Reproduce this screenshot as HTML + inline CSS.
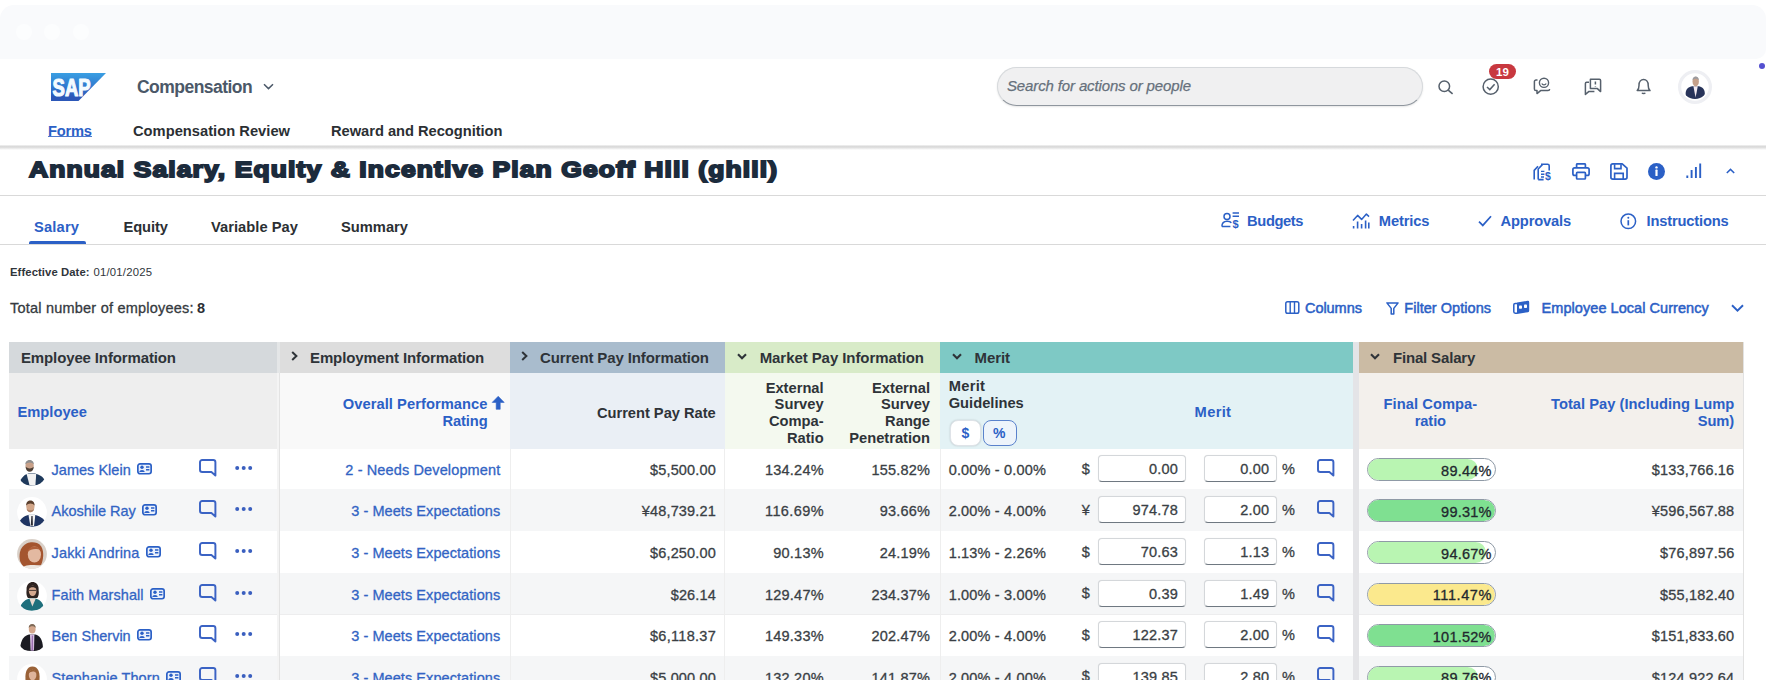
<!DOCTYPE html>
<html><head><meta charset="utf-8">
<style>
*{box-sizing:border-box;margin:0;padding:0}
html,body{width:1766px;height:680px;overflow:hidden;background:#fff;font-family:"Liberation Sans",sans-serif;color:#3a3f45}
.a{position:absolute;white-space:nowrap}
.x{line-height:20px;height:20px}
.r{position:absolute}
svg{position:absolute;overflow:visible}
</style></head><body>
<div class="r" style="left:0.00px;top:5.00px;width:1766.00px;height:54.00px;background:#f9fafc;border-radius:14px 14px 10px 0;"></div>
<div class="r" style="left:16.00px;top:24.00px;width:16.00px;height:16.00px;background:#fcfdfe;border-radius:50%;"></div>
<div class="r" style="left:44.00px;top:24.00px;width:16.00px;height:16.00px;background:#fcfdfe;border-radius:50%;"></div>
<div class="r" style="left:73.00px;top:24.00px;width:16.00px;height:16.00px;background:#fcfdfe;border-radius:50%;"></div>
<svg style="left:51.4px;top:72.6px" width="55" height="28" viewBox="0 0 55 28"><defs><linearGradient id="sg" x1="0" y1="0" x2="0" y2="1"><stop offset="0" stop-color="#3a9fe3"/><stop offset="0.55" stop-color="#2f74cc"/><stop offset="0.85" stop-color="#2c58b8"/><stop offset="1" stop-color="#2c58b8"/></linearGradient></defs><polygon points="0,0 55,0 27.5,28 0,28" fill="url(#sg)"/><text x="1.6" y="22.6" font-family="Liberation Sans" font-weight="bold" font-size="24" fill="#f4fbff" textLength="38" lengthAdjust="spacingAndGlyphs" stroke="#f4fbff" stroke-width="1.2" stroke-linejoin="round">SAP</text></svg>
<svg style="left:263.00px;top:83.30px" width="11" height="7" viewBox="0 0 11 7"><path d="M1 1.2 L5.5 5.6 L10 1.2" fill="none" stroke="#4b5868" stroke-width="1.5"/></svg>
<div class="r" style="left:0.00px;top:144.60px;width:1766.00px;height:5.40px;background:linear-gradient(#f4f4f4,#dadada 28%,#dcdcdc 45%,#efefef 75%,#fff);"></div>
<div class="r" style="left:48.00px;top:135.90px;width:44.00px;height:1.40px;background:#4d78cc;"></div>
<div class="r" style="left:0.00px;top:194.50px;width:1766.00px;height:1.00px;background:#d9d9d9;"></div>
<div class="r" style="left:28.50px;top:241.00px;width:57.00px;height:3.00px;background:#2b60c6;border-radius:2px 2px 0 0;"></div>
<div class="r" style="left:0.00px;top:244.00px;width:1766.00px;height:1.00px;background:#d9d9d9;"></div>
<div class="r" style="left:997.00px;top:67.00px;width:425.60px;height:38.50px;background:#f0f0f1;border-radius:19.5px;border:1px solid #d6d9dc;border-bottom:1.6px solid #8f969e;box-shadow:0 1px 2px rgba(0,0,0,.10);"></div>
<svg style="left:1438.2px;top:79.8px" width="16" height="15" viewBox="0 0 16 15"><circle cx="6.3" cy="6.3" r="5.3" fill="none" stroke="#56606c" stroke-width="1.5"/><path d="M10.2 10.2 L14.6 13.8" stroke="#56606c" stroke-width="1.6"/></svg>
<svg style="left:1482.3px;top:77.6px" width="18" height="18" viewBox="0 0 18 18"><circle cx="8.7" cy="8.7" r="7.6" fill="none" stroke="#56606c" stroke-width="1.5"/><path d="M5 9 L7.8 11.6 L12.6 6.2" fill="none" stroke="#56606c" stroke-width="1.5"/></svg>
<div class="r" style="left:1489.00px;top:64.20px;width:26.50px;height:15.30px;background:#c8383f;border-radius:8px;"></div>
<svg style="left:1533.4px;top:77.4px" width="18" height="18" viewBox="0 0 18 18"><path d="M4.5 3 H3 A1.6 1.6 0 0 0 1.4 4.6 V12 A1.6 1.6 0 0 0 3 13.6 H4 V16.6 L7.6 13.6 H15 A1.6 1.6 0 0 0 16.6 12" fill="none" stroke="#56606c" stroke-width="1.5" stroke-linejoin="round"/><circle cx="11" cy="5.8" r="4.6" fill="none" stroke="#56606c" stroke-width="1.4"/><path d="M8.8 6.6 C9.6 8.4 12.4 8.4 13.2 6.6" fill="none" stroke="#56606c" stroke-width="1.2"/></svg>
<svg style="left:1584.2px;top:77.8px" width="18" height="18" viewBox="0 0 18 18"><path d="M5 4.2 H2.6 A1.2 1.2 0 0 0 1.4 5.4 V16.4 L5 13.4 H10.4" fill="none" stroke="#56606c" stroke-width="1.5" stroke-linejoin="round"/><path d="M6.4 1.2 H15.4 A1.2 1.2 0 0 1 16.6 2.4 V13.6 L13.4 10.6 H6.4 Z" fill="none" stroke="#56606c" stroke-width="1.5" stroke-linejoin="round"/><path d="M11.4 3.4 V6.6 M11.4 8 V8.6" stroke="#56606c" stroke-width="1.5"/></svg>
<svg style="left:1636.2px;top:77.9px" width="16" height="17" viewBox="0 0 16 17"><path d="M1.2 12.6 C3.2 10.6 3 9 3 7 C3 3.6 5 1.4 7.6 1.4 C10.2 1.4 12.2 3.6 12.2 7 C12.2 9 12 10.6 14 12.6 Z" fill="none" stroke="#56606c" stroke-width="1.5" stroke-linejoin="round"/><path d="M6 14.8 C6.4 15.8 8.8 15.8 9.2 14.8" fill="none" stroke="#56606c" stroke-width="1.4"/></svg>
<svg style="left:1677px;top:68.7px" width="36" height="36" viewBox="0 0 36 36"><defs><clipPath id="cpu"><circle cx="18" cy="17.2" r="12.8"/></clipPath></defs><circle cx="18" cy="18" r="15.4" fill="#fff" stroke="#eeeff3" stroke-width="3.2"/><g clip-path="url(#cpu)"><path d="M8.6 25 C8.6 19.4 12 17.8 15.2 17.3 L21.8 17.3 C24.8 17.8 27.8 19.4 27.8 25 L27.8 32 L8.6 32 Z" fill="#28345a"/><path d="M16.4 17.2 L18.6 28.6 L20.8 17.2 Z" fill="#f3ebf2"/><ellipse cx="18.7" cy="12.6" rx="3.2" ry="4.9" fill="#c6a18b"/><path d="M15.5 11.6 C15.2 6.2 22.2 6.2 21.9 11.6 C20.6 9.2 16.8 9.2 15.5 11.6 Z" fill="#9b9b9f"/></g></svg>
<div class="r" style="left:1759.20px;top:63.20px;width:6.00px;height:6.00px;background:#5450d0;border-radius:50%;"></div>
<div class="r" style="left:9.00px;top:448.60px;width:1734.20px;height:40.80px;background:#ffffff;"></div>
<div class="r" style="left:9.00px;top:489.00px;width:1734.20px;height:1.40px;background:#ededee;"></div>
<div class="r" style="left:9.00px;top:489.40px;width:1734.20px;height:41.80px;background:#f5f6f7;"></div>
<div class="r" style="left:9.00px;top:530.80px;width:1734.20px;height:1.40px;background:#ededee;"></div>
<div class="r" style="left:9.00px;top:531.20px;width:1734.20px;height:41.80px;background:#ffffff;"></div>
<div class="r" style="left:9.00px;top:572.60px;width:1734.20px;height:1.40px;background:#ededee;"></div>
<div class="r" style="left:9.00px;top:573.00px;width:1734.20px;height:41.50px;background:#f5f6f7;"></div>
<div class="r" style="left:9.00px;top:614.10px;width:1734.20px;height:1.40px;background:#ededee;"></div>
<div class="r" style="left:9.00px;top:614.50px;width:1734.20px;height:41.50px;background:#ffffff;"></div>
<div class="r" style="left:9.00px;top:655.60px;width:1734.20px;height:1.40px;background:#ededee;"></div>
<div class="r" style="left:9.00px;top:656.00px;width:1734.20px;height:41.50px;background:#f5f6f7;"></div>
<div class="r" style="left:9.00px;top:697.10px;width:1734.20px;height:1.40px;background:#ededee;"></div>
<div class="r" style="left:9.00px;top:342.00px;width:268.40px;height:31.00px;background:#d5d9dc;"></div>
<div class="r" style="left:9.00px;top:373.00px;width:268.40px;height:75.60px;background:#eeeeee;"></div>
<div class="r" style="left:279.70px;top:342.00px;width:230.30px;height:31.00px;background:#dddddd;"></div>
<div class="r" style="left:279.70px;top:373.00px;width:230.30px;height:75.60px;background:#f9f9f9;"></div>
<div class="r" style="left:510.00px;top:342.00px;width:214.60px;height:31.00px;background:#a9bccd;"></div>
<div class="r" style="left:510.00px;top:373.00px;width:214.60px;height:75.60px;background:#eaeff5;"></div>
<div class="r" style="left:724.60px;top:342.00px;width:215.40px;height:31.00px;background:#d8ebc8;"></div>
<div class="r" style="left:724.60px;top:373.00px;width:215.40px;height:75.60px;background:#f4f9ef;"></div>
<div class="r" style="left:940.00px;top:342.00px;width:412.70px;height:31.00px;background:#7ec9c5;"></div>
<div class="r" style="left:940.00px;top:373.00px;width:412.70px;height:75.60px;background:#e3f2f5;"></div>
<div class="r" style="left:1358.90px;top:342.00px;width:384.30px;height:31.00px;background:#cbbba4;"></div>
<div class="r" style="left:1358.90px;top:373.00px;width:384.30px;height:75.60px;background:#f3f0ec;"></div>
<div class="r" style="left:277.40px;top:342.00px;width:2.30px;height:31.00px;background:#e4e6e7;"></div>
<div class="r" style="left:277.40px;top:373.00px;width:2.30px;height:307.00px;background:#f4f4f4;"></div>
<div class="r" style="left:278.60px;top:373.00px;width:1.00px;height:307.00px;background:#e3e3e3;"></div>
<div class="r" style="left:1352.70px;top:342.00px;width:6.20px;height:338.00px;background:#e4e4e7;"></div>
<div class="r" style="left:509.50px;top:448.60px;width:1.00px;height:231.40px;background:#eeeeee;"></div>
<div class="r" style="left:724.10px;top:448.60px;width:1.00px;height:231.40px;background:#eeeeee;"></div>
<div class="r" style="left:939.50px;top:448.60px;width:1.00px;height:231.40px;background:#eeeeee;"></div>
<div class="r" style="left:1743.20px;top:342.00px;width:1.00px;height:338.00px;background:#e2e2e2;"></div>
<svg style="left:290.60px;top:351.40px" width="7" height="10" viewBox="0 0 7 10"><path d="M1.2 1 L5.4 5 L1.2 9" fill="none" stroke="#2e3338" stroke-width="2"/></svg>
<svg style="left:521.20px;top:351.40px" width="7" height="10" viewBox="0 0 7 10"><path d="M1.2 1 L5.4 5 L1.2 9" fill="none" stroke="#2e3338" stroke-width="2"/></svg>
<svg style="left:737.30px;top:353.10px" width="10" height="6.6" viewBox="0 0 10 6.6"><path d="M1 1.2 L5.0 5.199999999999999 L9 1.2" fill="none" stroke="#2e3338" stroke-width="2.1"/></svg>
<svg style="left:951.70px;top:353.10px" width="10" height="6.6" viewBox="0 0 10 6.6"><path d="M1 1.2 L5.0 5.199999999999999 L9 1.2" fill="none" stroke="#2e3338" stroke-width="2.1"/></svg>
<svg style="left:1369.80px;top:353.10px" width="10" height="6.6" viewBox="0 0 10 6.6"><path d="M1 1.2 L5.0 5.199999999999999 L9 1.2" fill="none" stroke="#2e3338" stroke-width="2.1"/></svg>
<svg style="left:491.7px;top:396.3px" width="13" height="14" viewBox="0 0 13 14"><path d="M6.2 0.3 L12.2 6.4 H8.2 V13.3 H4.2 V6.4 H0.2 Z" fill="#2b60c6" stroke="#2b60c6" stroke-width="0.6" stroke-linejoin="round"/></svg>
<div class="r" style="left:949.80px;top:420.00px;width:31.70px;height:26.00px;background:#fff;border-radius:8px;border:1px solid #dfe3e8;box-shadow:0 0 2px rgba(0,0,0,.18);"></div>
<div class="r" style="left:982.50px;top:420.00px;width:34.10px;height:26.00px;background:#edf4fb;border-radius:8px;border:1.4px solid #5a82cc;"></div>
<svg style="left:17.40px;top:456.20px" width="30" height="30" viewBox="0 0 30 30"><defs><clipPath id="cp0"><circle cx="15" cy="15" r="14.9"/></clipPath></defs><g clip-path="url(#cp0)"><rect width="30" height="30" fill="#fff"/><path d="M2.5 27.5 C4 21 8 18.6 11.5 17.6 L18 17.6 C22 18.6 26.5 20.5 28.5 26 C24 30 8 31 2.5 27.5 Z" fill="#1f3a5c"/><path d="M9.6 18 L12.6 29.5 L18.4 29.5 L19.2 18 Z" fill="#f2f2f2"/><ellipse cx="12.6" cy="9.6" rx="4.1" ry="5.4" fill="#c9a189"/><path d="M8.4 8.6 C8 2.6 17.2 2.4 16.8 8.6 C15.4 5.8 10 5.8 8.4 8.6 Z" fill="#8f8f8f"/><path d="M8.6 10.6 C8.6 17.6 16.8 17.6 16.8 10.6 C15.6 13 10 13 8.6 10.6 Z" fill="#4d4036"/></g></svg>
<svg style="left:198.60px;top:459.20px" width="18" height="18" viewBox="0 0 18 18"><path d="M3.2 1 H14.2 A2.2 2.2 0 0 1 16.4 3.2 V16.4 L12.4 13 H3.2 A2.2 2.2 0 0 1 1 10.8 V3.2 A2.2 2.2 0 0 1 3.2 1 Z" fill="none" stroke="#3b63c4" stroke-width="1.95" stroke-linejoin="round"/></svg>
<svg style="left:234.90px;top:465.20px" width="18" height="6" viewBox="0 0 18 6"><circle cx="2.2" cy="3" r="2" fill="#3a5fbf"/><circle cx="8.7" cy="3" r="2" fill="#3a5fbf"/><circle cx="15.2" cy="3" r="2" fill="#3a5fbf"/></svg>
<svg style="left:137.30px;top:463.10px" width="15" height="12" viewBox="0 0 15 12"><rect x="0.85" y="0.85" width="13.3" height="9.9" rx="2.2" fill="#eaf0fb" stroke="#2b60c6" stroke-width="1.7"/><circle cx="5" cy="4.3" r="1.7" fill="#2b60c6"/><path d="M2.3 9 C2.3 6.2 7.7 6.2 7.7 9 Z" fill="#2b60c6"/><path d="M9 4 H12.4 M9 6.8 H12.4" stroke="#2b60c6" stroke-width="1.5"/></svg>
<div class="r" style="left:1098.00px;top:455.30px;width:88.30px;height:27.20px;background:#fff;border-radius:4px;border:1px solid #d4d7da;border-bottom:1.3px solid #6f7881;box-shadow:0 0 1px rgba(0,0,0,.1);"></div>
<div class="r" style="left:1203.90px;top:455.30px;width:73.20px;height:27.20px;background:#fff;border-radius:4px;border:1px solid #d4d7da;border-bottom:1.3px solid #6f7881;box-shadow:0 0 1px rgba(0,0,0,.1);"></div>
<svg style="left:1317.10px;top:459.20px" width="18" height="18" viewBox="0 0 18 18"><path d="M3.2 1 H14.2 A2.2 2.2 0 0 1 16.4 3.2 V16.4 L12.4 13 H3.2 A2.2 2.2 0 0 1 1 10.8 V3.2 A2.2 2.2 0 0 1 3.2 1 Z" fill="none" stroke="#3b63c4" stroke-width="1.95" stroke-linejoin="round"/></svg>
<div class="r" style="left:1367.2px;top:458.10px;width:128.5px;height:23.2px;border-radius:12px;border:1px solid #8f9aa6;background:#fff;overflow:hidden"><div style="width:87%;height:100%;background:#b9f5b2;border-radius:0 11px 11px 0"></div></div>
<svg style="left:17.40px;top:497.00px" width="30" height="30" viewBox="0 0 30 30"><defs><clipPath id="cp1"><circle cx="15" cy="15" r="14.9"/></clipPath></defs><g clip-path="url(#cp1)"><rect width="30" height="30" fill="#fff"/><path d="M1.8 27 C3 21 8 19 12 17.8 L17.6 17.8 C21.6 19 27 21 29.4 26.4 C24 30.5 8 31 1.8 27 Z" fill="#1f3563"/><path d="M11.4 17.6 L13.4 29 L17 29 L18.4 17.6 Z" fill="#f4f4f4"/><path d="M14.4 19 L13.8 28.6 L15.9 28.6 L15.6 19 Z" fill="#2a2a33"/><ellipse cx="13.4" cy="9.6" rx="4.1" ry="5.7" fill="#d2a689"/><path d="M9.2 8.8 C8.6 1.8 18 1.6 17.6 8.8 C16 5.6 11 5.6 9.2 8.8 Z" fill="#5a3f2d"/><path d="M9.8 12 C10.4 16.2 16.4 16.2 17 12 C15.4 13.8 11.4 13.8 9.8 12 Z" fill="#a87f66"/></g></svg>
<svg style="left:198.60px;top:500.00px" width="18" height="18" viewBox="0 0 18 18"><path d="M3.2 1 H14.2 A2.2 2.2 0 0 1 16.4 3.2 V16.4 L12.4 13 H3.2 A2.2 2.2 0 0 1 1 10.8 V3.2 A2.2 2.2 0 0 1 3.2 1 Z" fill="none" stroke="#3b63c4" stroke-width="1.95" stroke-linejoin="round"/></svg>
<svg style="left:234.90px;top:506.00px" width="18" height="6" viewBox="0 0 18 6"><circle cx="2.2" cy="3" r="2" fill="#3a5fbf"/><circle cx="8.7" cy="3" r="2" fill="#3a5fbf"/><circle cx="15.2" cy="3" r="2" fill="#3a5fbf"/></svg>
<svg style="left:142.40px;top:503.90px" width="15" height="12" viewBox="0 0 15 12"><rect x="0.85" y="0.85" width="13.3" height="9.9" rx="2.2" fill="#eaf0fb" stroke="#2b60c6" stroke-width="1.7"/><circle cx="5" cy="4.3" r="1.7" fill="#2b60c6"/><path d="M2.3 9 C2.3 6.2 7.7 6.2 7.7 9 Z" fill="#2b60c6"/><path d="M9 4 H12.4 M9 6.8 H12.4" stroke="#2b60c6" stroke-width="1.5"/></svg>
<div class="r" style="left:1098.00px;top:496.10px;width:88.30px;height:27.20px;background:#fff;border-radius:4px;border:1px solid #d4d7da;border-bottom:1.3px solid #6f7881;box-shadow:0 0 1px rgba(0,0,0,.1);"></div>
<div class="r" style="left:1203.90px;top:496.10px;width:73.20px;height:27.20px;background:#fff;border-radius:4px;border:1px solid #d4d7da;border-bottom:1.3px solid #6f7881;box-shadow:0 0 1px rgba(0,0,0,.1);"></div>
<svg style="left:1317.10px;top:500.00px" width="18" height="18" viewBox="0 0 18 18"><path d="M3.2 1 H14.2 A2.2 2.2 0 0 1 16.4 3.2 V16.4 L12.4 13 H3.2 A2.2 2.2 0 0 1 1 10.8 V3.2 A2.2 2.2 0 0 1 3.2 1 Z" fill="none" stroke="#3b63c4" stroke-width="1.95" stroke-linejoin="round"/></svg>
<div class="r" style="left:1367.2px;top:498.90px;width:128.5px;height:23.2px;border-radius:12px;border:1px solid #8f9aa6;background:#fff;overflow:hidden"><div style="width:100%;height:100%;background:#7fe091;border-radius:0 11px 11px 0"></div></div>
<svg style="left:17.40px;top:538.80px" width="30" height="30" viewBox="0 0 30 30"><defs><clipPath id="cp2"><circle cx="15" cy="15" r="14.9"/></clipPath></defs><g clip-path="url(#cp2)"><rect width="30" height="30" fill="#d9d0c8"/><path d="M3 22 C0 6 12 1 20 4 C28 7 27 20 24 26 L6 28 Z" fill="#a4552f"/><ellipse cx="17.4" cy="15.6" rx="6.6" ry="8" fill="#e3b9a1"/><path d="M10.4 13 C12 6.5 21 5.6 24.2 11.4 C20 9.2 14 9.4 10.4 13 Z" fill="#b0603a"/><path d="M4 30 C6 24.5 24 24.5 28 30 Z" fill="#ece6e0"/></g></svg>
<svg style="left:198.60px;top:541.80px" width="18" height="18" viewBox="0 0 18 18"><path d="M3.2 1 H14.2 A2.2 2.2 0 0 1 16.4 3.2 V16.4 L12.4 13 H3.2 A2.2 2.2 0 0 1 1 10.8 V3.2 A2.2 2.2 0 0 1 3.2 1 Z" fill="none" stroke="#3b63c4" stroke-width="1.95" stroke-linejoin="round"/></svg>
<svg style="left:234.90px;top:547.80px" width="18" height="6" viewBox="0 0 18 6"><circle cx="2.2" cy="3" r="2" fill="#3a5fbf"/><circle cx="8.7" cy="3" r="2" fill="#3a5fbf"/><circle cx="15.2" cy="3" r="2" fill="#3a5fbf"/></svg>
<svg style="left:145.90px;top:545.70px" width="15" height="12" viewBox="0 0 15 12"><rect x="0.85" y="0.85" width="13.3" height="9.9" rx="2.2" fill="#eaf0fb" stroke="#2b60c6" stroke-width="1.7"/><circle cx="5" cy="4.3" r="1.7" fill="#2b60c6"/><path d="M2.3 9 C2.3 6.2 7.7 6.2 7.7 9 Z" fill="#2b60c6"/><path d="M9 4 H12.4 M9 6.8 H12.4" stroke="#2b60c6" stroke-width="1.5"/></svg>
<div class="r" style="left:1098.00px;top:537.90px;width:88.30px;height:27.20px;background:#fff;border-radius:4px;border:1px solid #d4d7da;border-bottom:1.3px solid #6f7881;box-shadow:0 0 1px rgba(0,0,0,.1);"></div>
<div class="r" style="left:1203.90px;top:537.90px;width:73.20px;height:27.20px;background:#fff;border-radius:4px;border:1px solid #d4d7da;border-bottom:1.3px solid #6f7881;box-shadow:0 0 1px rgba(0,0,0,.1);"></div>
<svg style="left:1317.10px;top:541.80px" width="18" height="18" viewBox="0 0 18 18"><path d="M3.2 1 H14.2 A2.2 2.2 0 0 1 16.4 3.2 V16.4 L12.4 13 H3.2 A2.2 2.2 0 0 1 1 10.8 V3.2 A2.2 2.2 0 0 1 3.2 1 Z" fill="none" stroke="#3b63c4" stroke-width="1.95" stroke-linejoin="round"/></svg>
<div class="r" style="left:1367.2px;top:540.70px;width:128.5px;height:23.2px;border-radius:12px;border:1px solid #8f9aa6;background:#fff;overflow:hidden"><div style="width:93%;height:100%;background:#b9f5b2;border-radius:0 11px 11px 0"></div></div>
<svg style="left:17.40px;top:580.60px" width="30" height="30" viewBox="0 0 30 30"><defs><clipPath id="cp3"><circle cx="15" cy="15" r="14.9"/></clipPath></defs><g clip-path="url(#cp3)"><rect width="30" height="30" fill="#fff"/><path d="M3.2 27.4 C4 21 9 18.6 12.6 17.6 L18.6 17.6 C22 18.6 26 21 26.8 27 C22 30.5 8 30.5 3.2 27.4 Z" fill="#1f6f7c"/><path d="M12.4 17.4 L15.4 25.6 L18.8 17.4 Z" fill="#e9d9cf"/><path d="M9.6 9 C8.6 -1.6 22.6 -1.6 21.6 9 C22.2 13 21.4 15.6 20.2 17 L11 17 C9.8 15.6 9 13 9.6 9 Z" fill="#2e2320"/><ellipse cx="15.6" cy="9.8" rx="3.8" ry="5.2" fill="#d5a98f"/><path d="M11.6 8 C12.4 3.4 18.8 3.4 19.6 8 C17.6 5.8 13.6 5.8 11.6 8 Z" fill="#2e2320"/><path d="M12 9.4 H19.2" stroke="#3a2e2a" stroke-width="0.9"/></g></svg>
<svg style="left:198.60px;top:583.60px" width="18" height="18" viewBox="0 0 18 18"><path d="M3.2 1 H14.2 A2.2 2.2 0 0 1 16.4 3.2 V16.4 L12.4 13 H3.2 A2.2 2.2 0 0 1 1 10.8 V3.2 A2.2 2.2 0 0 1 3.2 1 Z" fill="none" stroke="#3b63c4" stroke-width="1.95" stroke-linejoin="round"/></svg>
<svg style="left:234.90px;top:589.60px" width="18" height="6" viewBox="0 0 18 6"><circle cx="2.2" cy="3" r="2" fill="#3a5fbf"/><circle cx="8.7" cy="3" r="2" fill="#3a5fbf"/><circle cx="15.2" cy="3" r="2" fill="#3a5fbf"/></svg>
<svg style="left:150.20px;top:587.50px" width="15" height="12" viewBox="0 0 15 12"><rect x="0.85" y="0.85" width="13.3" height="9.9" rx="2.2" fill="#eaf0fb" stroke="#2b60c6" stroke-width="1.7"/><circle cx="5" cy="4.3" r="1.7" fill="#2b60c6"/><path d="M2.3 9 C2.3 6.2 7.7 6.2 7.7 9 Z" fill="#2b60c6"/><path d="M9 4 H12.4 M9 6.8 H12.4" stroke="#2b60c6" stroke-width="1.5"/></svg>
<div class="r" style="left:1098.00px;top:579.70px;width:88.30px;height:27.20px;background:#fff;border-radius:4px;border:1px solid #d4d7da;border-bottom:1.3px solid #6f7881;box-shadow:0 0 1px rgba(0,0,0,.1);"></div>
<div class="r" style="left:1203.90px;top:579.70px;width:73.20px;height:27.20px;background:#fff;border-radius:4px;border:1px solid #d4d7da;border-bottom:1.3px solid #6f7881;box-shadow:0 0 1px rgba(0,0,0,.1);"></div>
<svg style="left:1317.10px;top:583.60px" width="18" height="18" viewBox="0 0 18 18"><path d="M3.2 1 H14.2 A2.2 2.2 0 0 1 16.4 3.2 V16.4 L12.4 13 H3.2 A2.2 2.2 0 0 1 1 10.8 V3.2 A2.2 2.2 0 0 1 3.2 1 Z" fill="none" stroke="#3b63c4" stroke-width="1.95" stroke-linejoin="round"/></svg>
<div class="r" style="left:1367.2px;top:582.50px;width:128.5px;height:23.2px;border-radius:12px;border:1px solid #8f9aa6;background:#fff;overflow:hidden"><div style="width:100%;height:100%;background:#fbe98d;border-radius:0 11px 11px 0"></div></div>
<svg style="left:17.40px;top:622.10px" width="30" height="30" viewBox="0 0 30 30"><defs><clipPath id="cp4"><circle cx="15" cy="15" r="14.9"/></clipPath></defs><g clip-path="url(#cp4)"><rect width="30" height="30" fill="#fff"/><path d="M3.2 26.6 C3.6 17 8 13.6 12 12.6 L18.4 12.6 C22.4 13.6 25.6 17 26 26.2 C21 30 8 30 3.2 26.6 Z" fill="#1b1b22"/><path d="M13 12.4 L13.6 28.5 L17 28.5 L17.4 12.4 Z" fill="#d9c3e3"/><path d="M14.8 13.4 L14.4 28.5 L16.2 28.5 L15.9 13.4 Z" fill="#9a6fb0"/><ellipse cx="15.2" cy="6.9" rx="3.4" ry="4.6" fill="#d4a78c"/><path d="M11.7 6 C11.4 0.6 19 0.6 18.7 6 C17.4 3.8 13 3.8 11.7 6 Z" fill="#7d6a58"/></g></svg>
<svg style="left:198.60px;top:625.10px" width="18" height="18" viewBox="0 0 18 18"><path d="M3.2 1 H14.2 A2.2 2.2 0 0 1 16.4 3.2 V16.4 L12.4 13 H3.2 A2.2 2.2 0 0 1 1 10.8 V3.2 A2.2 2.2 0 0 1 3.2 1 Z" fill="none" stroke="#3b63c4" stroke-width="1.95" stroke-linejoin="round"/></svg>
<svg style="left:234.90px;top:631.10px" width="18" height="6" viewBox="0 0 18 6"><circle cx="2.2" cy="3" r="2" fill="#3a5fbf"/><circle cx="8.7" cy="3" r="2" fill="#3a5fbf"/><circle cx="15.2" cy="3" r="2" fill="#3a5fbf"/></svg>
<svg style="left:137.30px;top:629.00px" width="15" height="12" viewBox="0 0 15 12"><rect x="0.85" y="0.85" width="13.3" height="9.9" rx="2.2" fill="#eaf0fb" stroke="#2b60c6" stroke-width="1.7"/><circle cx="5" cy="4.3" r="1.7" fill="#2b60c6"/><path d="M2.3 9 C2.3 6.2 7.7 6.2 7.7 9 Z" fill="#2b60c6"/><path d="M9 4 H12.4 M9 6.8 H12.4" stroke="#2b60c6" stroke-width="1.5"/></svg>
<div class="r" style="left:1098.00px;top:621.20px;width:88.30px;height:27.20px;background:#fff;border-radius:4px;border:1px solid #d4d7da;border-bottom:1.3px solid #6f7881;box-shadow:0 0 1px rgba(0,0,0,.1);"></div>
<div class="r" style="left:1203.90px;top:621.20px;width:73.20px;height:27.20px;background:#fff;border-radius:4px;border:1px solid #d4d7da;border-bottom:1.3px solid #6f7881;box-shadow:0 0 1px rgba(0,0,0,.1);"></div>
<svg style="left:1317.10px;top:625.10px" width="18" height="18" viewBox="0 0 18 18"><path d="M3.2 1 H14.2 A2.2 2.2 0 0 1 16.4 3.2 V16.4 L12.4 13 H3.2 A2.2 2.2 0 0 1 1 10.8 V3.2 A2.2 2.2 0 0 1 3.2 1 Z" fill="none" stroke="#3b63c4" stroke-width="1.95" stroke-linejoin="round"/></svg>
<div class="r" style="left:1367.2px;top:624.00px;width:128.5px;height:23.2px;border-radius:12px;border:1px solid #8f9aa6;background:#fff;overflow:hidden"><div style="width:100%;height:100%;background:#7fe091;border-radius:0 11px 11px 0"></div></div>
<svg style="left:17.40px;top:663.60px" width="30" height="30" viewBox="0 0 30 30"><defs><clipPath id="cp5"><circle cx="15" cy="15" r="14.9"/></clipPath></defs><g clip-path="url(#cp5)"><rect width="30" height="30" fill="#fff"/><path d="M3 28 C4 22 9 20 12.4 19 L18.4 19 C22 20 26 22 27 28 Z" fill="#c0392b"/><path d="M9 20 C7 8 10 2.4 15.4 2.4 C21 2.4 24 8 22 20 Z" fill="#9a6238"/><ellipse cx="15.6" cy="11" rx="3.8" ry="5.2" fill="#deb39a"/><path d="M11.6 9.4 C12 4.4 19.4 4.4 19.8 9.4 C17.6 6.6 14 7 11.6 9.4 Z" fill="#9a6238"/></g></svg>
<svg style="left:198.60px;top:666.60px" width="18" height="18" viewBox="0 0 18 18"><path d="M3.2 1 H14.2 A2.2 2.2 0 0 1 16.4 3.2 V16.4 L12.4 13 H3.2 A2.2 2.2 0 0 1 1 10.8 V3.2 A2.2 2.2 0 0 1 3.2 1 Z" fill="none" stroke="#3b63c4" stroke-width="1.95" stroke-linejoin="round"/></svg>
<svg style="left:234.90px;top:672.60px" width="18" height="6" viewBox="0 0 18 6"><circle cx="2.2" cy="3" r="2" fill="#3a5fbf"/><circle cx="8.7" cy="3" r="2" fill="#3a5fbf"/><circle cx="15.2" cy="3" r="2" fill="#3a5fbf"/></svg>
<svg style="left:166.30px;top:670.50px" width="15" height="12" viewBox="0 0 15 12"><rect x="0.85" y="0.85" width="13.3" height="9.9" rx="2.2" fill="#eaf0fb" stroke="#2b60c6" stroke-width="1.7"/><circle cx="5" cy="4.3" r="1.7" fill="#2b60c6"/><path d="M2.3 9 C2.3 6.2 7.7 6.2 7.7 9 Z" fill="#2b60c6"/><path d="M9 4 H12.4 M9 6.8 H12.4" stroke="#2b60c6" stroke-width="1.5"/></svg>
<div class="r" style="left:1098.00px;top:662.70px;width:88.30px;height:27.20px;background:#fff;border-radius:4px;border:1px solid #d4d7da;border-bottom:1.3px solid #6f7881;box-shadow:0 0 1px rgba(0,0,0,.1);"></div>
<div class="r" style="left:1203.90px;top:662.70px;width:73.20px;height:27.20px;background:#fff;border-radius:4px;border:1px solid #d4d7da;border-bottom:1.3px solid #6f7881;box-shadow:0 0 1px rgba(0,0,0,.1);"></div>
<svg style="left:1317.10px;top:666.60px" width="18" height="18" viewBox="0 0 18 18"><path d="M3.2 1 H14.2 A2.2 2.2 0 0 1 16.4 3.2 V16.4 L12.4 13 H3.2 A2.2 2.2 0 0 1 1 10.8 V3.2 A2.2 2.2 0 0 1 3.2 1 Z" fill="none" stroke="#3b63c4" stroke-width="1.95" stroke-linejoin="round"/></svg>
<div class="r" style="left:1367.2px;top:665.50px;width:128.5px;height:23.2px;border-radius:12px;border:1px solid #8f9aa6;background:#fff;overflow:hidden"><div style="width:87%;height:100%;background:#b9f5b2;border-radius:0 11px 11px 0"></div></div>
<svg style="left:1533px;top:162.6px" width="19" height="18" viewBox="0 0 19 18"><path d="M8 1.2 H14.6 A1.6 1.6 0 0 1 16.2 2.8 V7.4 M5.2 16.6 V6 L9.6 1.4 M5.2 16.6 H10.6" fill="none" stroke="#2b60c6" stroke-width="1.6" stroke-linejoin="round"/><path d="M1.2 16.6 V7.4 L5 3.2" fill="none" stroke="#2b60c6" stroke-width="1.6"/><path d="M8 8.4 H11.4 M8 11.2 H11.4 M8 14 H11" stroke="#2b60c6" stroke-width="1.4"/><text x="12" y="17" font-family="Liberation Sans" font-weight="bold" font-size="10.5" fill="#2b60c6">$</text></svg>
<svg style="left:1571.6px;top:163.2px" width="18" height="17" viewBox="0 0 18 17"><path d="M4.6 5 V1.6 A0.8 0.8 0 0 1 5.4 0.9 H12.6 A0.8 0.8 0 0 1 13.4 1.6 V5" fill="none" stroke="#2b60c6" stroke-width="1.7"/><path d="M4.4 12.4 H2.6 A1.7 1.7 0 0 1 0.9 10.7 V6.6 A1.7 1.7 0 0 1 2.6 4.9 H15.4 A1.7 1.7 0 0 1 17.1 6.6 V10.7 A1.7 1.7 0 0 1 15.4 12.4 H13.6" fill="none" stroke="#2b60c6" stroke-width="1.7"/><rect x="4.6" y="9.4" width="8.8" height="6.6" rx="0.8" fill="none" stroke="#2b60c6" stroke-width="1.7"/></svg>
<svg style="left:1610px;top:163.2px" width="18" height="17" viewBox="0 0 18 17"><path d="M2.8 0.9 H12.2 L17 5.2 V14.2 A1.9 1.9 0 0 1 15.1 16.1 H2.8 A1.9 1.9 0 0 1 0.9 14.2 V2.8 A1.9 1.9 0 0 1 2.8 0.9 Z" fill="none" stroke="#2b60c6" stroke-width="1.7" stroke-linejoin="round"/><path d="M4.6 1.2 V5.6 H11 V1.2" fill="none" stroke="#2b60c6" stroke-width="1.6"/><path d="M4.6 16 V10.4 H13.2 V16" fill="none" stroke="#2b60c6" stroke-width="1.6"/></svg>
<svg style="left:1648.2px;top:162.8px" width="17" height="17" viewBox="0 0 17 17"><circle cx="8.5" cy="8.5" r="8.5" fill="#2b60c6"/><circle cx="8.5" cy="4.4" r="1.2" fill="#fff"/><rect x="7.4" y="6.6" width="2.2" height="6.4" rx="0.6" fill="#fff"/></svg>
<svg style="left:1686.2px;top:163.4px" width="16" height="16" viewBox="0 0 16 16"><path d="M1.3 12.4 V15 M5.6 7 V15 M9.9 4 V15 M14.2 0.4 V15" stroke="#2b60c6" stroke-width="1.9"/></svg>
<svg style="left:1726.4px;top:168.4px" width="9" height="6" viewBox="0 0 9 6"><path d="M0.8 5 L4.5 1.4 L8.2 5" fill="none" stroke="#2b60c6" stroke-width="1.5"/></svg>
<svg style="left:1220.6px;top:212px" width="19" height="17" viewBox="0 0 19 17"><circle cx="6" cy="4.4" r="3" fill="none" stroke="#2b60c6" stroke-width="1.5"/><path d="M0.9 14.6 C0.9 9.6 4 9.2 6 9.2 C8 9.2 9.6 9.6 10.2 11 M0.9 14.6 H9.4" fill="none" stroke="#2b60c6" stroke-width="1.5"/><path d="M11.6 1 H18 M11.6 4.2 H18" stroke="#2b60c6" stroke-width="1.5"/><text x="11.4" y="16.2" font-family="Liberation Sans" font-weight="bold" font-size="11" fill="#2b60c6">$</text></svg>
<svg style="left:1352px;top:212.6px" width="18" height="16" viewBox="0 0 18 16"><path d="M1 7.6 L5.6 2.4 L9.6 6.4 L14.4 1 L17 3.6" fill="none" stroke="#2b60c6" stroke-width="1.5" stroke-linejoin="round"/><path d="M1.6 13 V15.4 M5.6 8.4 V15.4 M9.6 11 V15.4 M13.6 7.4 V15.4 M16.8 9.4 V15.4" stroke="#2b60c6" stroke-width="1.6"/></svg>
<svg style="left:1478px;top:215.2px" width="14" height="12" viewBox="0 0 14 12"><path d="M1 6.6 L4.8 10.4 L13 1.2" fill="none" stroke="#2b60c6" stroke-width="1.7"/></svg>
<svg style="left:1620.4px;top:212.7px" width="17" height="17" viewBox="0 0 17 17"><circle cx="8.3" cy="8.3" r="7.3" fill="none" stroke="#2b60c6" stroke-width="1.5"/><circle cx="8.3" cy="4.8" r="1" fill="#2b60c6"/><path d="M8.3 7.2 V12.4" stroke="#2b60c6" stroke-width="1.7"/></svg>
<svg style="left:1284.5px;top:301.2px" width="15" height="13" viewBox="0 0 15 13"><rect x="0.8" y="0.8" width="13" height="11.4" rx="1.8" fill="none" stroke="#2b60c6" stroke-width="1.5"/><path d="M5.2 1 V12 M9.5 1 V12" stroke="#2b60c6" stroke-width="1.4"/></svg>
<svg style="left:1386.4px;top:301.6px" width="13" height="13" viewBox="0 0 13 13"><path d="M0.9 0.9 H12.1 L7.8 6.4 V12 H5.2 V6.4 Z" fill="none" stroke="#2b60c6" stroke-width="1.5" stroke-linejoin="round"/></svg>
<svg style="left:1512.8px;top:300.2px" width="17" height="16" viewBox="0 0 17 16"><path d="M4 2.6 L14.6 0.8 A1.4 1.4 0 0 1 16.2 2.2 V10.8 A1.4 1.4 0 0 1 15 12.2 L4 14 Z" fill="#2b60c6"/><path d="M4 3.4 H2.2 A1.4 1.4 0 0 0 0.8 4.8 V11.8 A1.4 1.4 0 0 0 2.2 13.2 H4" fill="none" stroke="#2b60c6" stroke-width="1.5"/><rect x="6" y="5.4" width="3" height="3.4" rx="0.8" fill="#fff"/><rect x="11" y="4.6" width="3" height="3.4" rx="0.8" fill="#fff"/></svg>
<svg style="left:1730.50px;top:304.00px" width="13" height="8" viewBox="0 0 13 8"><path d="M1 1.2 L6.5 6.6 L12 1.2" fill="none" stroke="#2b60c6" stroke-width="1.9"/></svg>
<div class="a x" style="top:76.60px;font-size:17.5px;color:#4b5868;font-weight:bold;letter-spacing:-0.532px;left:137.00px;">Compensation</div>
<div class="a x" style="top:120.50px;font-size:14.7px;color:#2b60c6;font-weight:bold;letter-spacing:-0.223px;left:48.00px;">Forms</div>
<div class="a x" style="top:120.50px;font-size:14.7px;color:#2b2f33;font-weight:bold;letter-spacing:0.016px;left:133.00px;">Compensation Review</div>
<div class="a x" style="top:120.50px;font-size:14.7px;color:#2b2f33;font-weight:bold;letter-spacing:-0.033px;left:331.00px;">Reward and Recognition</div>
<div class="a x" style="top:160.10px;font-size:22.4px;color:#1c2b3c;font-weight:bold;letter-spacing:0.952px;left:28.60px;-webkit-text-stroke:1.85px #1c2b3c;transform:scaleX(1.18);transform-origin:0 50%;">Annual Salary, Equity &amp; Incentive Plan Geoff Hill (ghill)</div>
<div class="a x" style="top:217.20px;font-size:14.7px;color:#2b60c6;font-weight:bold;letter-spacing:0.178px;left:34.00px;">Salary</div>
<div class="a x" style="top:217.20px;font-size:14.7px;color:#2b2f33;font-weight:bold;letter-spacing:-0.078px;left:123.50px;">Equity</div>
<div class="a x" style="top:217.20px;font-size:14.7px;color:#2b2f33;font-weight:bold;letter-spacing:0.040px;left:211.00px;">Variable Pay</div>
<div class="a x" style="top:217.20px;font-size:14.7px;color:#2b2f33;font-weight:bold;letter-spacing:0.008px;left:341.00px;">Summary</div>
<div class="a x" style="top:210.80px;font-size:14.7px;color:#2b60c6;font-weight:bold;letter-spacing:-0.392px;left:1247.10px;">Budgets</div>
<div class="a x" style="top:210.80px;font-size:14.7px;color:#2b60c6;font-weight:bold;letter-spacing:-0.123px;left:1378.80px;">Metrics</div>
<div class="a x" style="top:210.80px;font-size:14.7px;color:#2b60c6;font-weight:bold;letter-spacing:-0.154px;left:1500.60px;">Approvals</div>
<div class="a x" style="top:210.80px;font-size:14.7px;color:#2b60c6;font-weight:bold;letter-spacing:-0.160px;left:1646.50px;">Instructions</div>
<div class="a x" style="top:76.20px;font-size:15px;color:#66707c;letter-spacing:-0.134px;left:1007.00px;font-style:italic;-webkit-text-stroke:0.25px #66707c;">Search for actions or people</div>
<div class="a x" style="top:61.80px;font-size:11.5px;color:#fff;font-weight:bold;letter-spacing:0.203px;left:1496.00px;">19</div>
<div class="a x" style="top:262.00px;font-size:11.3px;color:#30353b;font-weight:bold;letter-spacing:0.073px;left:10.00px;">Effective Date:</div>
<div class="a x" style="top:262.00px;font-size:11.3px;color:#30353b;letter-spacing:0.217px;left:93.50px;">01/01/2025</div>
<div class="a x" style="top:297.70px;font-size:14.5px;color:#353a40;letter-spacing:0.215px;left:10.00px;-webkit-text-stroke:0.3px #353a40;">Total number of employees:</div>
<div class="a x" style="top:297.70px;font-size:14.5px;color:#2b2f33;font-weight:bold;letter-spacing:-0.078px;left:197.00px;">8</div>
<div class="a x" style="top:298.00px;font-size:14.5px;color:#2b60c6;letter-spacing:-0.053px;left:1305.00px;-webkit-text-stroke:0.5px #2b60c6;">Columns</div>
<div class="a x" style="top:298.00px;font-size:14.5px;color:#2b60c6;letter-spacing:0.036px;left:1404.30px;-webkit-text-stroke:0.5px #2b60c6;">Filter Options</div>
<div class="a x" style="top:298.00px;font-size:14.5px;color:#2b60c6;letter-spacing:0.053px;left:1541.60px;-webkit-text-stroke:0.5px #2b60c6;">Employee Local Currency</div>
<div class="a x" style="top:347.60px;font-size:15px;color:#2e3338;font-weight:bold;letter-spacing:-0.133px;left:21.00px;">Employee Information</div>
<div class="a x" style="top:347.60px;font-size:15px;color:#2e3338;font-weight:bold;letter-spacing:-0.114px;left:310.00px;">Employment Information</div>
<div class="a x" style="top:347.60px;font-size:15px;color:#2e3338;font-weight:bold;letter-spacing:-0.122px;left:540.00px;">Current Pay Information</div>
<div class="a x" style="top:347.60px;font-size:15px;color:#2e3338;font-weight:bold;letter-spacing:-0.075px;left:759.70px;">Market Pay Information</div>
<div class="a x" style="top:347.60px;font-size:15px;color:#2e3338;font-weight:bold;letter-spacing:-0.086px;left:974.50px;">Merit</div>
<div class="a x" style="top:347.60px;font-size:15px;color:#2e3338;font-weight:bold;letter-spacing:-0.156px;left:1392.90px;">Final Salary</div>
<div class="a x" style="top:402.20px;font-size:14.7px;color:#2b60c6;font-weight:bold;letter-spacing:0.030px;left:17.40px;">Employee</div>
<div class="a x" style="top:394.00px;font-size:14.7px;color:#2b60c6;font-weight:bold;letter-spacing:0.062px;left:342.70px;">Overall Performance</div>
<div class="a x" style="top:410.70px;font-size:14.7px;color:#2b60c6;font-weight:bold;letter-spacing:-0.101px;left:442.50px;">Rating</div>
<div class="a x" style="top:402.70px;font-size:14.7px;color:#2e3338;font-weight:bold;letter-spacing:-0.018px;left:596.90px;">Current Pay Rate</div>
<div class="a x" style="top:377.70px;font-size:14.7px;color:#2e3338;font-weight:bold;right:942.40px;">External</div>
<div class="a x" style="top:377.70px;font-size:14.7px;color:#2e3338;font-weight:bold;right:836.00px;">External</div>
<div class="a x" style="top:394.30px;font-size:14.7px;color:#2e3338;font-weight:bold;right:942.40px;">Survey</div>
<div class="a x" style="top:394.30px;font-size:14.7px;color:#2e3338;font-weight:bold;right:836.00px;">Survey</div>
<div class="a x" style="top:410.90px;font-size:14.7px;color:#2e3338;font-weight:bold;right:942.40px;">Compa-</div>
<div class="a x" style="top:410.90px;font-size:14.7px;color:#2e3338;font-weight:bold;right:836.00px;">Range</div>
<div class="a x" style="top:427.50px;font-size:14.7px;color:#2e3338;font-weight:bold;right:942.40px;">Ratio</div>
<div class="a x" style="top:427.50px;font-size:14.7px;color:#2e3338;font-weight:bold;right:836.00px;">Penetration</div>
<div class="a x" style="top:376.40px;font-size:14.7px;color:#2e3338;font-weight:bold;letter-spacing:0.302px;left:948.70px;">Merit</div>
<div class="a x" style="top:393.00px;font-size:14.7px;color:#2e3338;font-weight:bold;letter-spacing:0.001px;left:948.70px;">Guidelines</div>
<div class="a x" style="top:423.00px;font-size:14px;color:#2b60c6;font-weight:bold;letter-spacing:0.703px;left:961.50px;">$</div>
<div class="a x" style="top:423.00px;font-size:14px;color:#2b60c6;font-weight:bold;letter-spacing:1.547px;left:993.00px;">%</div>
<div class="a x" style="top:401.70px;font-size:14.7px;color:#2b60c6;font-weight:bold;letter-spacing:0.327px;left:1194.60px;">Merit</div>
<div class="a x" style="top:394.00px;font-size:14.7px;color:#2b60c6;font-weight:bold;letter-spacing:0.061px;left:1383.50px;">Final Compa-</div>
<div class="a x" style="top:411.00px;font-size:14.7px;color:#2b60c6;font-weight:bold;letter-spacing:-0.107px;left:1414.70px;">ratio</div>
<div class="a x" style="top:394.00px;font-size:14.7px;color:#2b60c6;font-weight:bold;letter-spacing:0.029px;left:1551.00px;">Total Pay (Including Lump</div>
<div class="a x" style="top:411.00px;font-size:14.7px;color:#2b60c6;font-weight:bold;letter-spacing:-0.106px;left:1697.80px;">Sum)</div>
<div class="a x" style="top:460.10px;font-size:14.5px;color:#3264c4;letter-spacing:0.012px;left:51.60px;-webkit-text-stroke:0.3px #3264c4;">James Klein</div>
<div class="a x" style="top:460.10px;font-size:14.5px;color:#3264c4;letter-spacing:0.129px;left:345.30px;-webkit-text-stroke:0.3px #3264c4;">2 - Needs Development</div>
<div class="a x" style="top:460.10px;font-size:14.5px;color:#3a3f45;letter-spacing:0.161px;left:650.00px;-webkit-text-stroke:0.3px #3a3f45;">$5,500.00</div>
<div class="a x" style="top:460.10px;font-size:14.5px;color:#3a3f45;letter-spacing:0.225px;left:765.00px;-webkit-text-stroke:0.3px #3a3f45;">134.24%</div>
<div class="a x" style="top:460.10px;font-size:14.5px;color:#3a3f45;letter-spacing:0.225px;left:871.40px;-webkit-text-stroke:0.3px #3a3f45;">155.82%</div>
<div class="a x" style="top:460.10px;font-size:14.5px;color:#3a3f45;letter-spacing:0.165px;left:948.70px;-webkit-text-stroke:0.3px #3a3f45;">0.00% - 0.00%</div>
<div class="a x" style="top:459.00px;font-size:14.5px;color:#3a3f45;letter-spacing:-0.078px;left:1081.80px;-webkit-text-stroke:0.3px #3a3f45;">$</div>
<div class="a x" style="top:459.40px;font-size:14.5px;color:#3a3f45;letter-spacing:0.189px;left:1149.00px;-webkit-text-stroke:0.3px #3a3f45;">0.00</div>
<div class="a x" style="top:459.40px;font-size:14.5px;color:#3a3f45;letter-spacing:0.189px;left:1240.30px;-webkit-text-stroke:0.3px #3a3f45;">0.00</div>
<div class="a x" style="top:459.20px;font-size:14.5px;color:#3a3f45;letter-spacing:-0.006px;left:1282.10px;-webkit-text-stroke:0.3px #3a3f45;">%</div>
<div class="a x" style="top:461.00px;font-size:14.5px;color:#22282e;letter-spacing:0.222px;left:1441.10px;-webkit-text-stroke:0.3px #22282e;">89.44%</div>
<div class="a x" style="top:460.10px;font-size:14.5px;color:#3a3f45;letter-spacing:0.186px;left:1651.70px;-webkit-text-stroke:0.3px #3a3f45;">$133,766.16</div>
<div class="a x" style="top:500.90px;font-size:14.5px;color:#3264c4;letter-spacing:-0.039px;left:51.60px;-webkit-text-stroke:0.3px #3264c4;">Akoshile Ray</div>
<div class="a x" style="top:500.90px;font-size:14.5px;color:#3264c4;letter-spacing:0.071px;left:351.20px;-webkit-text-stroke:0.3px #3264c4;">3 - Meets Expectations</div>
<div class="a x" style="top:500.90px;font-size:14.5px;color:#3a3f45;letter-spacing:0.158px;left:641.80px;-webkit-text-stroke:0.3px #3a3f45;">¥48,739.21</div>
<div class="a x" style="top:500.90px;font-size:14.5px;color:#3a3f45;letter-spacing:0.405px;left:765.00px;-webkit-text-stroke:0.3px #3a3f45;">116.69%</div>
<div class="a x" style="top:500.90px;font-size:14.5px;color:#3a3f45;letter-spacing:0.222px;left:879.70px;-webkit-text-stroke:0.3px #3a3f45;">93.66%</div>
<div class="a x" style="top:500.90px;font-size:14.5px;color:#3a3f45;letter-spacing:0.165px;left:948.70px;-webkit-text-stroke:0.3px #3a3f45;">2.00% - 4.00%</div>
<div class="a x" style="top:499.80px;font-size:14.5px;color:#3a3f45;letter-spacing:-0.078px;left:1081.80px;-webkit-text-stroke:0.3px #3a3f45;">¥</div>
<div class="a x" style="top:500.20px;font-size:14.5px;color:#3a3f45;letter-spacing:0.208px;left:1132.40px;-webkit-text-stroke:0.3px #3a3f45;">974.78</div>
<div class="a x" style="top:500.20px;font-size:14.5px;color:#3a3f45;letter-spacing:0.189px;left:1240.30px;-webkit-text-stroke:0.3px #3a3f45;">2.00</div>
<div class="a x" style="top:500.00px;font-size:14.5px;color:#3a3f45;letter-spacing:-0.006px;left:1282.10px;-webkit-text-stroke:0.3px #3a3f45;">%</div>
<div class="a x" style="top:501.80px;font-size:14.5px;color:#22282e;letter-spacing:0.222px;left:1441.10px;-webkit-text-stroke:0.3px #22282e;">99.31%</div>
<div class="a x" style="top:500.90px;font-size:14.5px;color:#3a3f45;letter-spacing:0.186px;left:1651.70px;-webkit-text-stroke:0.3px #3a3f45;">¥596,567.88</div>
<div class="a x" style="top:542.70px;font-size:14.5px;color:#3264c4;letter-spacing:0.121px;left:51.60px;-webkit-text-stroke:0.3px #3264c4;">Jakki Andrina</div>
<div class="a x" style="top:542.70px;font-size:14.5px;color:#3264c4;letter-spacing:0.071px;left:351.20px;-webkit-text-stroke:0.3px #3264c4;">3 - Meets Expectations</div>
<div class="a x" style="top:542.70px;font-size:14.5px;color:#3a3f45;letter-spacing:0.161px;left:650.00px;-webkit-text-stroke:0.3px #3a3f45;">$6,250.00</div>
<div class="a x" style="top:542.70px;font-size:14.5px;color:#3a3f45;letter-spacing:0.222px;left:773.30px;-webkit-text-stroke:0.3px #3a3f45;">90.13%</div>
<div class="a x" style="top:542.70px;font-size:14.5px;color:#3a3f45;letter-spacing:0.222px;left:879.70px;-webkit-text-stroke:0.3px #3a3f45;">24.19%</div>
<div class="a x" style="top:542.70px;font-size:14.5px;color:#3a3f45;letter-spacing:0.165px;left:948.70px;-webkit-text-stroke:0.3px #3a3f45;">1.13% - 2.26%</div>
<div class="a x" style="top:541.60px;font-size:14.5px;color:#3a3f45;letter-spacing:-0.078px;left:1081.80px;-webkit-text-stroke:0.3px #3a3f45;">$</div>
<div class="a x" style="top:542.00px;font-size:14.5px;color:#3a3f45;letter-spacing:0.201px;left:1140.70px;-webkit-text-stroke:0.3px #3a3f45;">70.63</div>
<div class="a x" style="top:542.00px;font-size:14.5px;color:#3a3f45;letter-spacing:0.189px;left:1240.30px;-webkit-text-stroke:0.3px #3a3f45;">1.13</div>
<div class="a x" style="top:541.80px;font-size:14.5px;color:#3a3f45;letter-spacing:-0.006px;left:1282.10px;-webkit-text-stroke:0.3px #3a3f45;">%</div>
<div class="a x" style="top:543.60px;font-size:14.5px;color:#22282e;letter-spacing:0.222px;left:1441.10px;-webkit-text-stroke:0.3px #22282e;">94.67%</div>
<div class="a x" style="top:542.70px;font-size:14.5px;color:#3a3f45;letter-spacing:0.180px;left:1660.00px;-webkit-text-stroke:0.3px #3a3f45;">$76,897.56</div>
<div class="a x" style="top:584.50px;font-size:14.5px;color:#3264c4;letter-spacing:0.072px;left:51.60px;-webkit-text-stroke:0.3px #3264c4;">Faith Marshall</div>
<div class="a x" style="top:584.50px;font-size:14.5px;color:#3264c4;letter-spacing:0.071px;left:351.20px;-webkit-text-stroke:0.3px #3264c4;">3 - Meets Expectations</div>
<div class="a x" style="top:584.50px;font-size:14.5px;color:#3a3f45;letter-spacing:0.148px;left:670.70px;-webkit-text-stroke:0.3px #3a3f45;">$26.14</div>
<div class="a x" style="top:584.50px;font-size:14.5px;color:#3a3f45;letter-spacing:0.225px;left:765.00px;-webkit-text-stroke:0.3px #3a3f45;">129.47%</div>
<div class="a x" style="top:584.50px;font-size:14.5px;color:#3a3f45;letter-spacing:0.225px;left:871.40px;-webkit-text-stroke:0.3px #3a3f45;">234.37%</div>
<div class="a x" style="top:584.50px;font-size:14.5px;color:#3a3f45;letter-spacing:0.165px;left:948.70px;-webkit-text-stroke:0.3px #3a3f45;">1.00% - 3.00%</div>
<div class="a x" style="top:583.40px;font-size:14.5px;color:#3a3f45;letter-spacing:-0.078px;left:1081.80px;-webkit-text-stroke:0.3px #3a3f45;">$</div>
<div class="a x" style="top:583.80px;font-size:14.5px;color:#3a3f45;letter-spacing:0.189px;left:1149.00px;-webkit-text-stroke:0.3px #3a3f45;">0.39</div>
<div class="a x" style="top:583.80px;font-size:14.5px;color:#3a3f45;letter-spacing:0.189px;left:1240.30px;-webkit-text-stroke:0.3px #3a3f45;">1.49</div>
<div class="a x" style="top:583.60px;font-size:14.5px;color:#3a3f45;letter-spacing:-0.006px;left:1282.10px;-webkit-text-stroke:0.3px #3a3f45;">%</div>
<div class="a x" style="top:585.40px;font-size:14.5px;color:#22282e;letter-spacing:0.584px;left:1432.80px;-webkit-text-stroke:0.3px #22282e;">111.47%</div>
<div class="a x" style="top:584.50px;font-size:14.5px;color:#3a3f45;letter-spacing:0.180px;left:1660.00px;-webkit-text-stroke:0.3px #3a3f45;">$55,182.40</div>
<div class="a x" style="top:626.00px;font-size:14.5px;color:#3264c4;letter-spacing:0.010px;left:51.60px;-webkit-text-stroke:0.3px #3264c4;">Ben Shervin</div>
<div class="a x" style="top:626.00px;font-size:14.5px;color:#3264c4;letter-spacing:0.071px;left:351.20px;-webkit-text-stroke:0.3px #3264c4;">3 - Meets Expectations</div>
<div class="a x" style="top:626.00px;font-size:14.5px;color:#3a3f45;letter-spacing:0.295px;left:650.00px;-webkit-text-stroke:0.3px #3a3f45;">$6,118.37</div>
<div class="a x" style="top:626.00px;font-size:14.5px;color:#3a3f45;letter-spacing:0.225px;left:765.00px;-webkit-text-stroke:0.3px #3a3f45;">149.33%</div>
<div class="a x" style="top:626.00px;font-size:14.5px;color:#3a3f45;letter-spacing:0.225px;left:871.40px;-webkit-text-stroke:0.3px #3a3f45;">202.47%</div>
<div class="a x" style="top:626.00px;font-size:14.5px;color:#3a3f45;letter-spacing:0.165px;left:948.70px;-webkit-text-stroke:0.3px #3a3f45;">2.00% - 4.00%</div>
<div class="a x" style="top:624.90px;font-size:14.5px;color:#3a3f45;letter-spacing:-0.078px;left:1081.80px;-webkit-text-stroke:0.3px #3a3f45;">$</div>
<div class="a x" style="top:625.30px;font-size:14.5px;color:#3a3f45;letter-spacing:0.208px;left:1132.40px;-webkit-text-stroke:0.3px #3a3f45;">122.37</div>
<div class="a x" style="top:625.30px;font-size:14.5px;color:#3a3f45;letter-spacing:0.189px;left:1240.30px;-webkit-text-stroke:0.3px #3a3f45;">2.00</div>
<div class="a x" style="top:625.10px;font-size:14.5px;color:#3a3f45;letter-spacing:-0.006px;left:1282.10px;-webkit-text-stroke:0.3px #3a3f45;">%</div>
<div class="a x" style="top:626.90px;font-size:14.5px;color:#22282e;letter-spacing:0.225px;left:1432.80px;-webkit-text-stroke:0.3px #22282e;">101.52%</div>
<div class="a x" style="top:626.00px;font-size:14.5px;color:#3a3f45;letter-spacing:0.186px;left:1651.70px;-webkit-text-stroke:0.3px #3a3f45;">$151,833.60</div>
<div class="a x" style="top:667.50px;font-size:14.5px;color:#3264c4;letter-spacing:0.082px;left:51.60px;-webkit-text-stroke:0.3px #3264c4;">Stephanie Thorn</div>
<div class="a x" style="top:667.50px;font-size:14.5px;color:#3264c4;letter-spacing:0.071px;left:351.20px;-webkit-text-stroke:0.3px #3264c4;">3 - Meets Expectations</div>
<div class="a x" style="top:667.50px;font-size:14.5px;color:#3a3f45;letter-spacing:0.161px;left:650.00px;-webkit-text-stroke:0.3px #3a3f45;">$5,000.00</div>
<div class="a x" style="top:667.50px;font-size:14.5px;color:#3a3f45;letter-spacing:0.225px;left:765.00px;-webkit-text-stroke:0.3px #3a3f45;">132.20%</div>
<div class="a x" style="top:667.50px;font-size:14.5px;color:#3a3f45;letter-spacing:0.225px;left:871.40px;-webkit-text-stroke:0.3px #3a3f45;">141.87%</div>
<div class="a x" style="top:667.50px;font-size:14.5px;color:#3a3f45;letter-spacing:0.165px;left:948.70px;-webkit-text-stroke:0.3px #3a3f45;">2.00% - 4.00%</div>
<div class="a x" style="top:666.40px;font-size:14.5px;color:#3a3f45;letter-spacing:-0.078px;left:1081.80px;-webkit-text-stroke:0.3px #3a3f45;">$</div>
<div class="a x" style="top:666.80px;font-size:14.5px;color:#3a3f45;letter-spacing:0.208px;left:1132.40px;-webkit-text-stroke:0.3px #3a3f45;">139.85</div>
<div class="a x" style="top:666.80px;font-size:14.5px;color:#3a3f45;letter-spacing:0.189px;left:1240.30px;-webkit-text-stroke:0.3px #3a3f45;">2.80</div>
<div class="a x" style="top:666.60px;font-size:14.5px;color:#3a3f45;letter-spacing:-0.006px;left:1282.10px;-webkit-text-stroke:0.3px #3a3f45;">%</div>
<div class="a x" style="top:668.40px;font-size:14.5px;color:#22282e;letter-spacing:0.222px;left:1441.10px;-webkit-text-stroke:0.3px #22282e;">89.76%</div>
<div class="a x" style="top:667.50px;font-size:14.5px;color:#3a3f45;letter-spacing:0.186px;left:1651.70px;-webkit-text-stroke:0.3px #3a3f45;">$124,922.64</div>
</body></html>
